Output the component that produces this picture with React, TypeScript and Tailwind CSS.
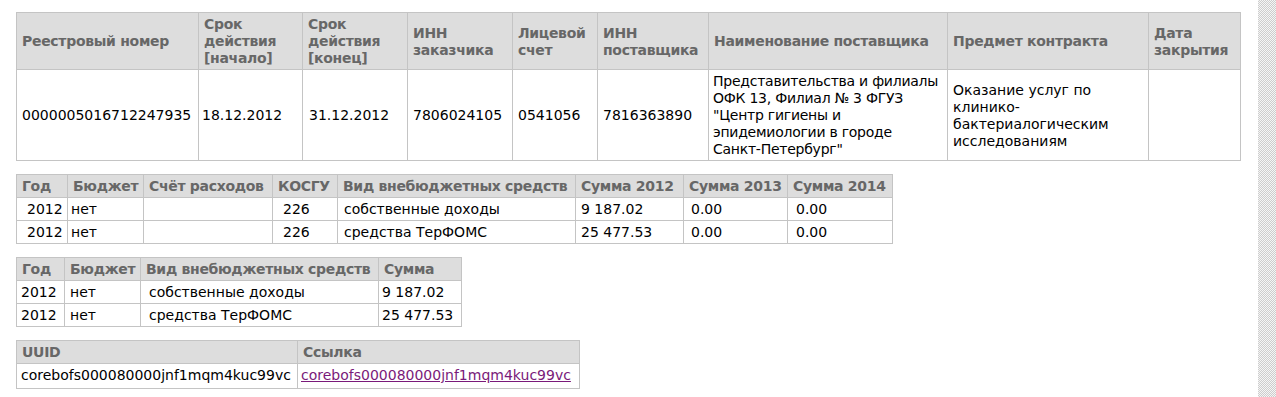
import type { ReactNode } from "react";

type CellProps = {
  children?: ReactNode;
  className?: string;
};

const Th = ({ children, className = "" }: CellProps) => (
  <th
    className={`border border-[#c4c4c4] bg-[#dddddd] px-[5px] pt-[3px] pb-[2px] text-left align-middle font-bold tracking-[-0.3px] text-[#676767] ${className}`}
  >
    {children}
  </th>
);

const Td = ({ children, className = "" }: CellProps) => (
  <td
    className={`border border-[#c4c4c4] px-[5px] pt-[3px] pb-[2px] align-middle text-black ${className}`}
  >
    {children}
  </td>
);

const budgetRows = [
  { year: "2012", budget: "нет", kosgu: "226", kind: "собственные доходы", s2012: "9 187.02", s2013: "0.00", s2014: "0.00" },
  { year: "2012", budget: "нет", kosgu: "226", kind: "средства ТерФОМС", s2012: "25 477.53", s2013: "0.00", s2014: "0.00" },
];

export default function App() {
  return (
    <div className="flex min-h-screen bg-white font-['DejaVu_Sans',Verdana,sans-serif] text-[14px] leading-[17px]">
      <main className="flex-1 pt-[12px] pl-[16px]">
        {/* контракт */}
        <table className="w-[1224px] table-fixed border-collapse">
          <thead>
            <tr>
              <Th className="w-[182px]">Реестровый номер</Th>
              <Th className="w-[104px]">Срок действия [начало]</Th>
              <Th className="w-[105px]">Срок действия [конец]</Th>
              <Th className="w-[105px]">ИНН заказчика</Th>
              <Th className="w-[85px]">Лицевой счет</Th>
              <Th className="w-[111px]">ИНН поставщика</Th>
              <Th className="w-[239px]">Наименование поставщика</Th>
              <Th className="w-[201px]">Предмет контракта</Th>
              <Th className="w-[92px]">Дата закрытия</Th>
            </tr>
          </thead>
          <tbody>
            <tr className="h-[91px]">
              <Td>0000005016712247935</Td>
              <Td className="pl-[3px]">18.12.2012</Td>
              <Td className="pl-[6px]">31.12.2012</Td>
              <Td>7806024105</Td>
              <Td>0541056</Td>
              <Td>7816363890</Td>
              <Td className="pl-[4px] pr-[2px] tracking-[-0.25px]">
                Представительства и филиалы ОФК 13, Филиал № 3 ФГУЗ "Центр гигиены и эпидемиологии в городе{" "}
                <span className="whitespace-nowrap">Санкт-Петербург"</span>
              </Td>
              <Td>Оказание услуг по клинико-бактериалогическим исследованиям</Td>
              <Td></Td>
            </tr>
          </tbody>
        </table>

        {/* финансирование по годам */}
        <table className="mt-[13px] w-[876px] table-fixed border-collapse whitespace-nowrap">
          <thead>
            <tr>
              <Th className="w-[51px]">Год</Th>
              <Th className="w-[76px]">Бюджет</Th>
              <Th className="w-[129px]">Счёт расходов</Th>
              <Th className="w-[65px]">КОСГУ</Th>
              <Th className="w-[238px]">Вид внебюджетных средств</Th>
              <Th className="w-[108px]">Сумма 2012</Th>
              <Th className="w-[104px]">Сумма 2013</Th>
              <Th className="w-[105px]">Сумма 2014</Th>
            </tr>
          </thead>
          <tbody>
            {budgetRows.map((row, i) => (
              <tr key={i}>
                <Td className="pl-[10px]">{row.year}</Td>
                <Td className="pl-[3px]">{row.budget}</Td>
                <Td></Td>
                <Td className="pl-[10px]">{row.kosgu}</Td>
                <Td className="pl-[6px]">{row.kind}</Td>
                <Td>{row.s2012}</Td>
                <Td className="pl-[7px]">{row.s2013}</Td>
                <Td className="pl-[8px]">{row.s2014}</Td>
              </tr>
            ))}
          </tbody>
        </table>

        {/* итого */}
        <table className="mt-[13px] w-[445px] table-fixed border-collapse whitespace-nowrap">
          <thead>
            <tr>
              <Th className="w-[48px]">Год</Th>
              <Th className="w-[76px]">Бюджет</Th>
              <Th className="w-[238px]">Вид внебюджетных средств</Th>
              <Th className="w-[83px]">Сумма</Th>
            </tr>
          </thead>
          <tbody>
            {budgetRows.map((row, i) => (
              <tr key={i}>
                <Td className="pl-[4px]">{row.year}</Td>
                <Td>{row.budget}</Td>
                <Td className="pl-[8px]">{row.kind}</Td>
                <Td className="pl-[3px]">{row.s2012}</Td>
              </tr>
            ))}
          </tbody>
        </table>

        {/* ссылка */}
        <table className="mt-[13px] w-[563px] table-fixed border-collapse whitespace-nowrap">
          <thead>
            <tr>
              <Th className="w-[281px]">UUID</Th>
              <Th className="w-[282px]">Ссылка</Th>
            </tr>
          </thead>
          <tbody>
            <tr>
              <Td className="pb-[4px] pl-[4px]">corebofs000080000jnf1mqm4kuc99vc</Td>
              <Td className="pb-[4px] pl-[3px]">
                <a href="#" className="text-[#7a1a7a] underline">
                  corebofs000080000jnf1mqm4kuc99vc
                </a>
              </Td>
            </tr>
          </tbody>
        </table>
      </main>
      <aside className="w-[18px] shrink-0 bg-[repeating-conic-gradient(#cdcdcd_0%_25%,#f5f5f5_0%_50%)] bg-[length:2px_2px]" />
    </div>
  );
}
